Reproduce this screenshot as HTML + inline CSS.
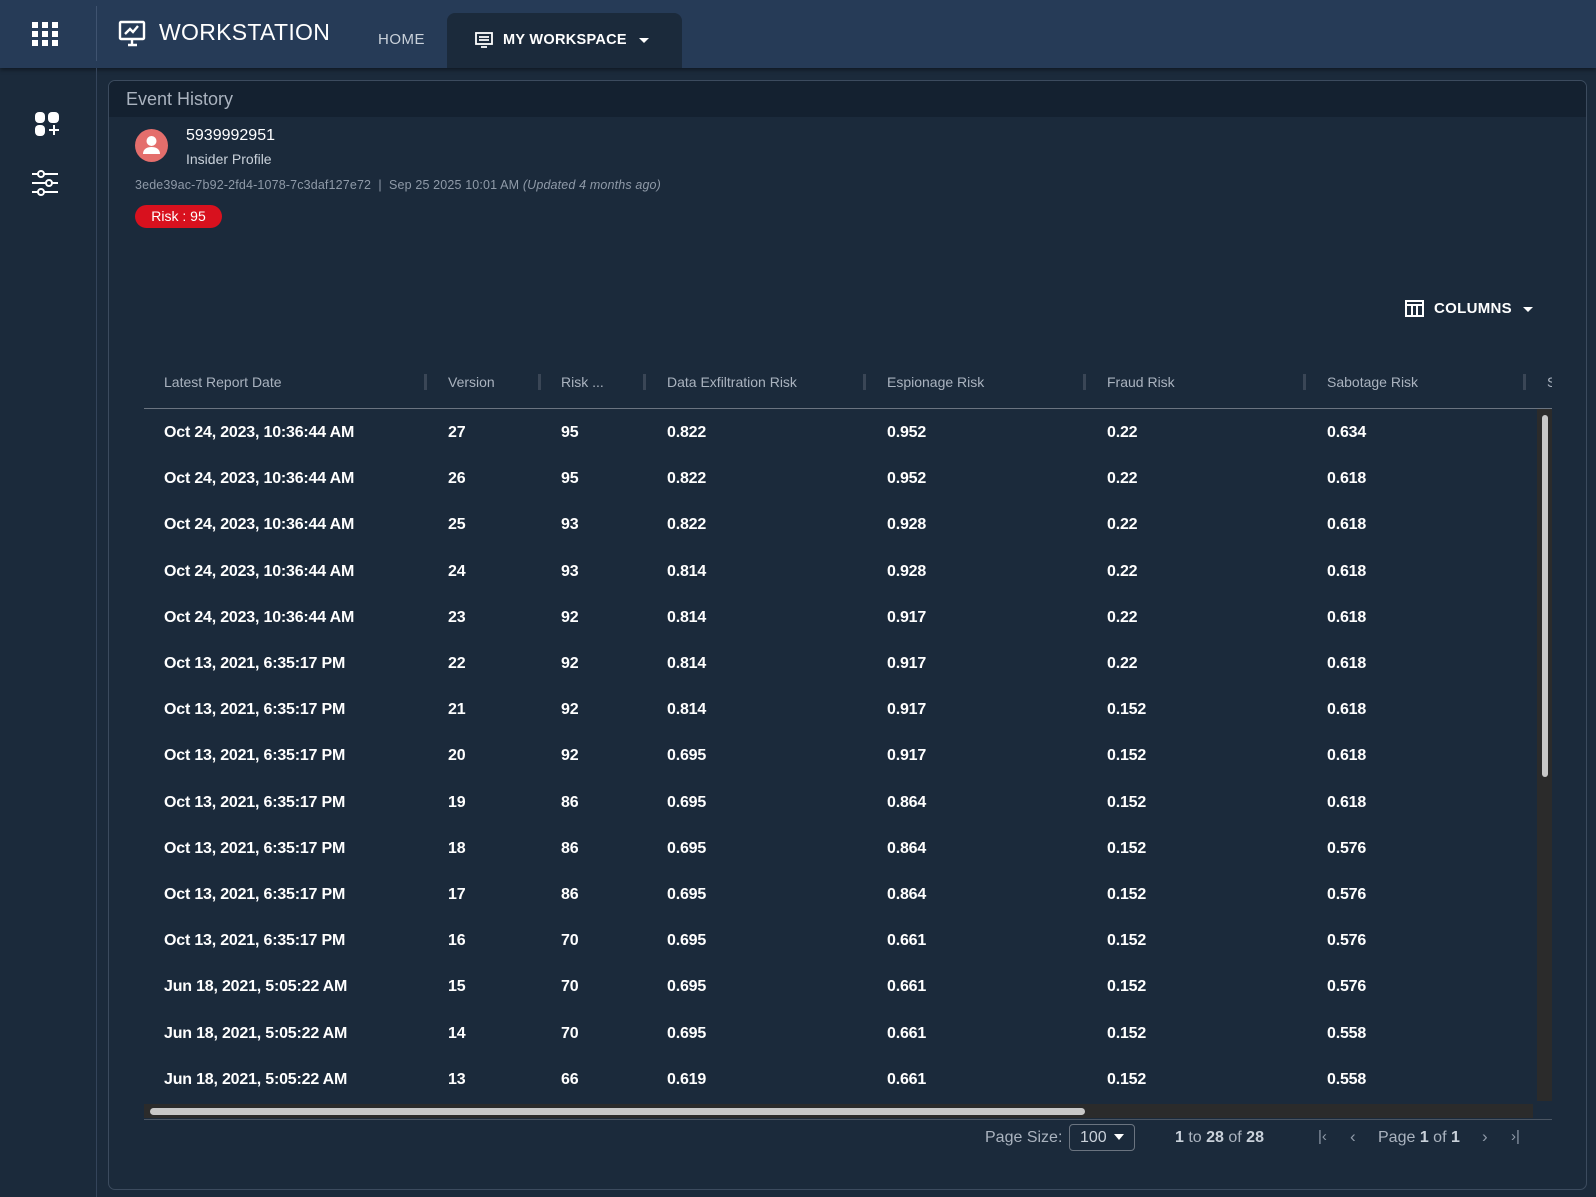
<!DOCTYPE html>
<html><head><meta charset="utf-8"><style>
*{margin:0;padding:0;box-sizing:border-box}
body{width:1596px;height:1197px;background:#1b2a3b;font-family:"Liberation Sans",sans-serif;position:relative;overflow:hidden;color:#fff}
.a{position:absolute;white-space:nowrap}
.top{position:absolute;left:0;top:0;width:1596px;height:68px;background:#263b57;box-shadow:0 2px 4px rgba(0,0,0,.4)}
.hd{font-size:14px;color:#aab3bf;top:374px}
.grip{position:absolute;top:374px;width:3px;height:16px;background:#3a4656}
.c{font-size:16px;font-weight:bold;color:#fff;letter-spacing:-.2px}
</style></head><body>
<div class="top"></div>
<div class="a" style="left:96px;top:6px;width:1px;height:55px;background:#3f5370"></div>
<svg class="a" style="left:32px;top:22px" width="26" height="25"><g fill="#fff"><rect x="0" y="0" width="6" height="6"/><rect x="10" y="0" width="6" height="6"/><rect x="20" y="0" width="6" height="6"/><rect x="0" y="9" width="6" height="6"/><rect x="10" y="9" width="6" height="6"/><rect x="20" y="9" width="6" height="6"/><rect x="0" y="18" width="6" height="6"/><rect x="10" y="18" width="6" height="6"/><rect x="20" y="18" width="6" height="6"/></g></svg>
<svg class="a" style="left:118px;top:20px" width="30" height="28" fill="none" stroke="#fff" stroke-width="2.4"><rect x="2" y="2" width="24" height="17" rx="1"/><path d="M7 14l5-5 3 3 5-6M10 25h9M14 19v6"/></svg>
<div class="a" style="left:159px;top:19px;font-size:23px;letter-spacing:.3px;color:#fff">WORKSTATION</div>
<div class="a" style="left:378px;top:31px;font-size:15px;color:#c9d1da;letter-spacing:.5px">HOME</div>
<div class="a" style="left:447px;top:13px;width:235px;height:55px;background:#1b2a3b;border-radius:8px 8px 0 0"></div>
<svg class="a" style="left:475px;top:31px" width="18" height="18" fill="none" stroke="#fff" stroke-width="1.8"><rect x="1" y="2" width="16" height="11"/><path d="M4 6h10M4 9h10M6 16h6"/></svg>
<div class="a" style="left:503px;top:32px;font-size:14.5px;font-weight:bold;color:#fff;letter-spacing:.3px">MY WORKSPACE</div>
<div class="a" style="left:639px;top:38px;border:5px solid transparent;border-top:5px solid #fff;border-bottom:0"></div>
<div class="a" style="left:96px;top:68px;width:1px;height:1129px;background:#34445a"></div>
<svg class="a" style="left:34px;top:112px" width="28" height="26" fill="#fff"><rect x="1" y="0" width="10" height="11" rx="4"/><rect x="14" y="0" width="11" height="11" rx="4"/><rect x="1" y="13" width="10" height="11" rx="4"/><path d="M19 13h2v4h4v2h-4v4h-2v-4h-4v-2h4z"/></svg>
<svg class="a" style="left:32px;top:170px" width="28" height="26" fill="none" stroke="#fff" stroke-width="2"><path d="M0 4h26M0 13h26M0 22h26"/><circle cx="9" cy="4" r="3" fill="#1b2a3b"/><circle cx="17" cy="13" r="3" fill="#1b2a3b"/><circle cx="9" cy="22" r="3" fill="#1b2a3b"/></svg>
<div class="a" style="left:108px;top:80px;width:1479px;height:1110px;border:1px solid #3c4b5e;border-radius:7px;overflow:hidden">
<div style="height:36px;background:#142130"></div></div>
<div class="a" style="left:126px;top:89px;font-size:18px;color:#aab3bf">Event History</div>
<div class="a" style="left:135px;top:129px;width:33px;height:33px;border-radius:50%;background:#e46e6c"></div>
<svg class="a" style="left:135px;top:129px" width="33" height="33" fill="#fff"><circle cx="16.5" cy="12" r="5"/><path d="M8 25c0-5 4-7 8.5-7s8.5 2 8.5 7z"/></svg>
<div class="a" style="left:186px;top:127px;font-size:16px;color:#fff">5939992951</div>
<div class="a" style="left:186px;top:151px;font-size:14px;color:#c9d1da">Insider Profile</div>
<div class="a" style="left:135px;top:178px;font-size:12.5px;color:#8f9aa8;letter-spacing:.15px">3ede39ac-7b92-2fd4-1078-7c3daf127e72 &nbsp;|&nbsp; Sep 25 2025 10:01 AM <i>(Updated 4 months ago)</i></div>
<div class="a" style="left:135px;top:205px;width:87px;height:23px;border-radius:12px;background:#d8111e;font-size:14px;color:#fff;text-align:center;line-height:23px">Risk : 95</div>
<svg class="a" style="left:1405px;top:300px" width="19" height="17" fill="none" stroke="#fff" stroke-width="2"><rect x="1" y="1" width="17" height="15"/><path d="M1 5h17M7 5v11M12 5v11"/></svg>
<div class="a" style="left:1434px;top:300px;font-size:15px;font-weight:bold;color:#fff;letter-spacing:.3px">COLUMNS</div>
<div class="a" style="left:1523px;top:307px;border:5px solid transparent;border-top:5px solid #fff;border-bottom:0"></div>
<div class="a hd" style="left:164px">Latest Report Date</div><div class="grip" style="left:424px"></div>
<div class="a hd" style="left:448px">Version</div><div class="grip" style="left:538px"></div>
<div class="a hd" style="left:561px">Risk ...</div><div class="grip" style="left:643px"></div>
<div class="a hd" style="left:667px">Data Exfiltration Risk</div><div class="grip" style="left:863px"></div>
<div class="a hd" style="left:887px">Espionage Risk</div><div class="grip" style="left:1083px"></div>
<div class="a hd" style="left:1107px">Fraud Risk</div><div class="grip" style="left:1303px"></div>
<div class="a hd" style="left:1327px">Sabotage Risk</div><div class="grip" style="left:1523px"></div>
<div class="a hd" style="left:1547px;width:5px;overflow:hidden">S</div>
<div class="a" style="left:144px;top:408px;width:1408px;height:1px;background:#6b7480"></div>
<div class="a" style="left:1537px;top:409px;width:15px;height:692px;background:#2b2b2b"></div>
<div class="a" style="left:1542px;top:415px;width:6px;height:362px;border-radius:3px;background:#c8c8c8"></div>
<div class="a" style="left:144px;top:1104px;width:1389px;height:14px;background:#2b2b2b"></div>
<div class="a" style="left:150px;top:1108px;width:935px;height:7px;border-radius:4px;background:#c8c8c8"></div>
<div class="a" style="left:144px;top:1119px;width:1408px;height:1px;background:#4a5563"></div>
<div id="rows"></div>
<div class="a" style="left:985px;top:1129px;font-size:16px;color:#aab3bf">Page Size:</div>
<div class="a" style="left:1069px;top:1124px;width:66px;height:27px;border:1px solid #6b7480;border-radius:4px;font-size:16px;color:#c9d1da;line-height:25px;padding-left:10px">100</div>
<div class="a" style="left:1114px;top:1134px;border:5px solid transparent;border-top:6px solid #fff;border-bottom:0"></div>
<div class="a" style="left:1175px;top:1129px;font-size:16px;color:#aab3bf"><b style="color:#c9d1da">1</b> to <b style="color:#c9d1da">28</b> of <b style="color:#c9d1da">28</b></div>
<div class="a" style="left:1318px;top:1128px;font-size:15px;color:#8f9aa8">|&lsaquo;</div>
<div class="a" style="left:1350px;top:1127px;font-size:17px;color:#8f9aa8">&lsaquo;</div>
<div class="a" style="left:1378px;top:1129px;font-size:16px;color:#aab3bf">Page <b style="color:#c9d1da">1</b> of <b style="color:#c9d1da">1</b></div>
<div class="a" style="left:1482px;top:1127px;font-size:17px;color:#8f9aa8">&rsaquo;</div>
<div class="a" style="left:1511px;top:1128px;font-size:15px;color:#8f9aa8">&rsaquo;|</div>
<script>
var d=[["Oct 24, 2023, 10:36:44 AM",27,95,"0.822","0.952","0.22","0.634"],["Oct 24, 2023, 10:36:44 AM",26,95,"0.822","0.952","0.22","0.618"],["Oct 24, 2023, 10:36:44 AM",25,93,"0.822","0.928","0.22","0.618"],["Oct 24, 2023, 10:36:44 AM",24,93,"0.814","0.928","0.22","0.618"],["Oct 24, 2023, 10:36:44 AM",23,92,"0.814","0.917","0.22","0.618"],["Oct 13, 2021, 6:35:17 PM",22,92,"0.814","0.917","0.22","0.618"],["Oct 13, 2021, 6:35:17 PM",21,92,"0.814","0.917","0.152","0.618"],["Oct 13, 2021, 6:35:17 PM",20,92,"0.695","0.917","0.152","0.618"],["Oct 13, 2021, 6:35:17 PM",19,86,"0.695","0.864","0.152","0.618"],["Oct 13, 2021, 6:35:17 PM",18,86,"0.695","0.864","0.152","0.576"],["Oct 13, 2021, 6:35:17 PM",17,86,"0.695","0.864","0.152","0.576"],["Oct 13, 2021, 6:35:17 PM",16,70,"0.695","0.661","0.152","0.576"],["Jun 18, 2021, 5:05:22 AM",15,70,"0.695","0.661","0.152","0.576"],["Jun 18, 2021, 5:05:22 AM",14,70,"0.695","0.661","0.152","0.558"],["Jun 18, 2021, 5:05:22 AM",13,66,"0.619","0.661","0.152","0.558"]];
var xs=[164,448,561,667,887,1107,1327],h="";
d.forEach(function(r,i){var y=Math.round(424+i*46.2);r.forEach(function(v,j){h+='<div class="a c" style="left:'+xs[j]+'px;top:'+y+'px">'+v+'</div>';});});
document.getElementById("rows").innerHTML=h;
</script>
</body></html>
